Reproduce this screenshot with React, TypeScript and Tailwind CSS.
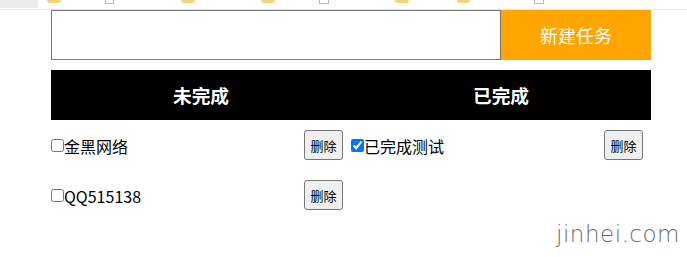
import { useState } from 'react';

interface Todo {
  id: number;
  title: string;
  done: boolean;
}

const font = { fontFamily: '"Noto Sans CJK SC", "Noto Sans", sans-serif' };

// remnants of the bookmark bar cut off above the page
const BookmarkStrip = () => (
  <div className="h-[10px] border-b border-[#e6e6e6] flex items-start">
    <div className="w-[38px] h-[8px] bg-[#ececef]" />
    <div className="ml-[9px] w-[14px] h-[3px] rounded-b-full bg-[#f3d37a]" />
    <div className="ml-[44px] w-[9px] h-[4px] border-x border-b border-[#b8b8b8]" />
    <div className="ml-[67px] w-[14px] h-[3px] rounded-b-full bg-[#f3d37a]" />
    <div className="ml-[66px] w-[14px] h-[3px] rounded-b-full bg-[#f3d37a]" />
    <div className="ml-[44px] w-[10px] h-[4px] border-x border-b border-[#b8b8b8]" />
    <div className="ml-[66px] w-[14px] h-[3px] rounded-b-full bg-[#f3d37a]" />
    <div className="ml-[48px] w-[13px] h-[3px] rounded-b-full bg-[#f3d37a]" />
    <div className="ml-[64px] w-[10px] h-[4px] border-x border-b border-[#b8b8b8]" />
  </div>
);

const TodoRow = ({ todo, onToggle, onRemove }: { todo: Todo; onToggle: () => void; onRemove: () => void }) => (
  <li className="h-[50px] flex items-center pr-[8px]">
    <input
      type="checkbox"
      checked={todo.done}
      onChange={onToggle}
      className="w-[13px] h-[13px] m-0 accent-[#0075ff]"
    />
    <span className="flex-1 text-[16px] text-black leading-none pt-[1px]">{todo.title}</span>
    <button
      onClick={onRemove}
      className="w-[39px] h-[30px] text-[13px] text-black bg-[#efefef] border border-[#767676] rounded-[3px] leading-none"
    >
      删除
    </button>
  </li>
);

export default function App() {
  const [todos, setTodos] = useState<Todo[]>([
    { id: 1, title: '金黑网络', done: false },
    { id: 2, title: '已完成测试', done: true },
    { id: 3, title: 'QQ515138', done: false },
  ]);
  const [text, setText] = useState('');

  const toggle = (id: number) =>
    setTodos(todos.map((t) => (t.id === id ? { ...t, done: !t.done } : t)));
  const remove = (id: number) => setTodos(todos.filter((t) => t.id !== id));
  const add = () => {
    if (!text.trim()) return;
    setTodos([...todos, { id: Date.now(), title: text, done: false }]);
    setText('');
  };

  const pending = todos.filter((t) => !t.done);
  const finished = todos.filter((t) => t.done);

  return (
    <div className="w-[687px] h-[257px] bg-white overflow-hidden" style={font}>
      <BookmarkStrip />

      <div className="ml-[51px] w-[600px]">
        <div className="flex h-[50px]">
          <input
            value={text}
            onChange={(e) => setText(e.target.value)}
            className="w-[450px] h-full border border-[#767676] outline-none px-2"
          />
          <button
            onClick={add}
            className="w-[150px] h-full bg-[#ffa500] text-white text-[18px] font-normal"
          >
            新建任务
          </button>
        </div>

        <div className="mt-[10px] h-[50px] bg-black grid grid-cols-2 items-center text-white font-bold text-[18.72px]">
          <h3 className="text-center">未完成</h3>
          <h3 className="text-center">已完成</h3>
        </div>

        <div className="grid grid-cols-2">
          <ul>
            {pending.map((t) => (
              <TodoRow key={t.id} todo={t} onToggle={() => toggle(t.id)} onRemove={() => remove(t.id)} />
            ))}
          </ul>
          <ul>
            {finished.map((t) => (
              <TodoRow key={t.id} todo={t} onToggle={() => toggle(t.id)} onRemove={() => remove(t.id)} />
            ))}
          </ul>
        </div>
      </div>

      <div className="flex justify-end pr-[7px] mt-[3px]">
        <span
          className="text-[23px] text-[#6b6b6b] leading-none tracking-[0.5px]"
          style={{ fontFamily: '"DejaVu Sans", sans-serif', fontStretch: 'condensed', fontWeight: 300 }}
        >
          jinhei.com
        </span>
      </div>
    </div>
  );
}
